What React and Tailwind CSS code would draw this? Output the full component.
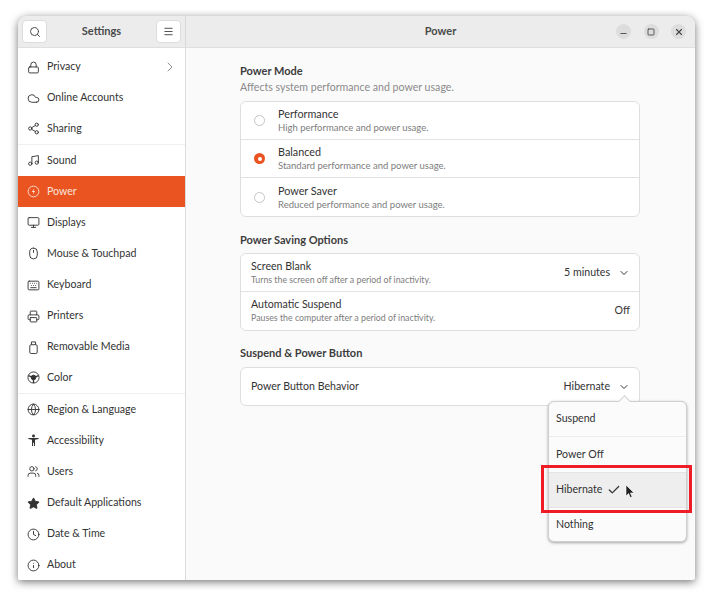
import { Search, Menu, Lock, Cloud, Share2, Music, Monitor, Mouse, Keyboard, Printer, Globe, Users, Star, Clock, Info, ChevronRight, ChevronDown, Check, Minus, Square, X } from 'lucide-react'

const PowerIcon = (p) => (
  <svg viewBox="0 0 14 14" fill="none" {...p}>
    <circle cx="7" cy="7" r="5.8" stroke="currentColor" strokeWidth="1" />
    <path d="M7.8 3.4 5.2 7.5h1.9l-.9 3.1 2.6-4.2H6.9z" fill="currentColor" />
  </svg>
)
const MediaIcon = (p) => (
  <svg viewBox="0 0 14 14" fill="none" stroke="currentColor" {...p} strokeWidth="1">
    <rect x="3" y="4" width="8" height="9.5" rx="1.5" />
    <path d="M4.8 4V1h4.4v3" />
  </svg>
)
const ColorIcon = (p) => (
  <svg viewBox="0 0 14 14" fill="none" stroke="currentColor" {...p} strokeWidth="1">
    <circle cx="7" cy="7" r="6" />
    <circle cx="7" cy="7" r="2.5" fill="currentColor" />
    <path d="M1.5 5 7 7l5.5-2M7 7v6" strokeWidth="1.4" />
  </svg>
)
const AccessIcon = (p) => (
  <svg viewBox="0 0 14 14" fill="currentColor" {...p}>
    <circle cx="7" cy="2.2" r="1.6" />
    <path d="M1.5 4.2h11v1.3L8.6 6.2V13H7.5V9.5h-1V13H5.4V6.2L1.5 5.5z" />
  </svg>
)

const nav = [
  { label: 'Privacy', icon: Lock, arrow: true },
  { label: 'Online Accounts', icon: Cloud },
  { label: 'Sharing', icon: Share2, sep: true },
  { label: 'Sound', icon: Music },
  { label: 'Power', icon: PowerIcon, active: true },
  { label: 'Displays', icon: Monitor },
  { label: 'Mouse & Touchpad', icon: Mouse },
  { label: 'Keyboard', icon: Keyboard },
  { label: 'Printers', icon: Printer },
  { label: 'Removable Media', icon: MediaIcon },
  { label: 'Color', icon: ColorIcon, sep: true },
  { label: 'Region & Language', icon: Globe },
  { label: 'Accessibility', icon: AccessIcon },
  { label: 'Users', icon: Users },
  { label: 'Default Applications', icon: Star, filled: true },
  { label: 'Date & Time', icon: Clock },
  { label: 'About', icon: Info },
]

const modes = [
  { title: 'Performance', sub: 'High performance and power usage.' },
  { title: 'Balanced', sub: 'Standard performance and power usage.', on: true },
  { title: 'Power Saver', sub: 'Reduced performance and power usage.' },
]

function NavRow({ item }) {
  const Icon = item.icon
  const extra = item.filled ? { fill: 'currentColor' } : {}
  return (
    <div className={`h-[31.15px] flex items-center pl-[9px] pr-[7px] text-[10.6px] ${item.active ? 'bg-[#e95420] text-[#fbe3d9]' : 'text-[#333]'} ${item.sep ? 'border-b border-[#efefef]' : ''}`}>
      <Icon className="w-[13px] h-[13px] shrink-0" strokeWidth={1.7} {...extra} />
      <span className="ml-[7px] flex-1">{item.label}</span>
      {item.arrow && <ChevronRight className="w-[16px] h-[16px] text-[#555]" strokeWidth={1} />}
    </div>
  )
}

function Heading({ children }) {
  return <div className="text-[11px] font-bold text-[#3d3d3d] leading-[14px]">{children}</div>
}

function SettingRow({ title, sub, value, chevron, last }) {
  return (
    <div className={`${sub ? 'h-[38px]' : 'h-[37px]'} flex items-center pl-[10px] pr-[9px] ${last ? '' : 'border-b border-[#e2e2e2]'}`}>
      <div className="flex-1">
        <div className="text-[10.6px] text-[#333] leading-[13px]">{title}</div>
        {sub && <div className="text-[8.8px] text-[#7d7d7d] leading-[12px] mt-[1px]">{sub}</div>}
      </div>
      <span className="text-[10.6px] text-[#333]">{value}</span>
      {chevron && <ChevronDown className="w-[12px] h-[12px] ml-[8px] text-[#333]" strokeWidth={2} />}
    </div>
  )
}

export default function App() {
  return (
    <div className="h-[600px] bg-white overflow-hidden pt-[16px] pl-[18px]" style={{ fontFamily: 'Lato, "Noto Sans", sans-serif' }}>
      <div className="relative w-[677px] h-[564px] rounded-t-[9px] rounded-b-[2px] overflow-hidden flex flex-col bg-[#fafafa] shadow-[0_2px_9px_rgba(0,0,0,0.55)]">
        <header className="h-[32px] shrink-0 flex bg-[#ececec] border-b border-[#dfdfdf]">
          <div className="w-[168px] shrink-0 flex items-center justify-between px-[4px] border-r border-[#d9d9d9]">
            <div className="w-[25px] h-[23px] bg-white rounded-[4px] border border-[#dcdcdc] flex items-center justify-center">
              <Search className="w-[12px] h-[12px] text-[#444]" strokeWidth={1.9} />
            </div>
            <span className="text-[11px] font-bold text-[#4a4a4a]">Settings</span>
            <div className="w-[25px] h-[23px] bg-white rounded-[4px] border border-[#dcdcdc] flex items-center justify-center">
              <Menu className="w-[11px] h-[11px] text-[#444]" strokeWidth={2} />
            </div>
          </div>
          <div className="flex-1 flex items-center relative">
            <div className="flex-1 text-center text-[11px] font-bold text-[#4a4a4a]">Power</div>
            <div className="absolute right-[9px] top-[8px] flex gap-[12.5px]">
              <div className="w-[15px] h-[15px] rounded-full bg-[#dddddd] flex items-center justify-center"><Minus className="w-[9px] h-[9px] text-[#444] translate-y-[2px]" strokeWidth={2.4} /></div>
              <div className="w-[15px] h-[15px] rounded-full bg-[#dddddd] flex items-center justify-center"><Square className="w-[8px] h-[8px] text-[#444]" strokeWidth={2.6} /></div>
              <div className="w-[15px] h-[15px] rounded-full bg-[#dddddd] flex items-center justify-center"><X className="w-[10px] h-[10px] text-[#444]" strokeWidth={2.6} /></div>
            </div>
          </div>
        </header>

        <div className="flex-1 flex min-h-0">
          <aside className="w-[168px] shrink-0 bg-white border-r border-[#dcdcdc] pt-[3.5px]">
            {nav.map((item) => <NavRow key={item.label} item={item} />)}
          </aside>

          <main className="flex-1 pt-[16px] pl-[54px]">
            <div className="w-[400px]">
              <Heading>Power Mode</Heading>
              <div className="text-[10.6px] text-[#8a8a8a] leading-[14px] mt-[2px]">Affects system performance and power usage.</div>
              <div className="mt-[7px] bg-white rounded-[6px] border border-[#dedede]">
                {modes.map((m, i) => (
                  <div key={m.title} className={`h-[38px] flex items-center ${i < 2 ? 'border-b border-[#e2e2e2]' : ''}`}>
                    <div className="w-[37px] flex justify-center">
                      {m.on ? (
                        <div className="w-[11px] h-[11px] rounded-full bg-[#e95420] flex items-center justify-center"><div className="w-[4px] h-[4px] rounded-full bg-white" /></div>
                      ) : (
                        <div className="w-[11px] h-[11px] rounded-full border border-[#c4c4c4] bg-white" />
                      )}
                    </div>
                    <div>
                      <div className="text-[10.8px] text-[#333] leading-[13px]">{m.title}</div>
                      <div className="text-[9.5px] text-[#7d7d7d] leading-[12px] mt-[2px]">{m.sub}</div>
                    </div>
                  </div>
                ))}
              </div>

              <div className="mt-[16px]"><Heading>Power Saving Options</Heading></div>
              <div className="mt-[6px] bg-white rounded-[6px] border border-[#dedede]">
                <SettingRow title="Screen Blank" sub="Turns the screen off after a period of inactivity." value="5 minutes" chevron />
                <SettingRow title="Automatic Suspend" sub="Pauses the computer after a period of inactivity." value="Off" last />
              </div>

              <div className="mt-[15px]"><Heading>Suspend &amp; Power Button</Heading></div>
              <div className="mt-[7px] bg-white rounded-[6px] border border-[#dedede]">
                <SettingRow title="Power Button Behavior" value="Hibernate" chevron last />
              </div>
            </div>
          </main>
        </div>

        {/* popover over the combo row */}
        <div className="absolute left-[530px] top-[385px] w-[139px] h-[141px] bg-[#fbfbfb] rounded-[6px] border border-[#cfcfcf] shadow-[0_1px_3px_rgba(0,0,0,0.35)] text-[10.6px] text-[#333] flex flex-col">
          <div className="absolute left-[71px] top-[-5px] w-[9px] h-[9px] rotate-45 bg-[#fbfbfb] border-l border-t border-[#cfcfcf]" />
          <div className="h-[35px] flex items-center pl-[7px] border-b border-[#ececec]">Suspend</div>
          <div className="h-[35px] flex items-center pl-[7px]">Power Off</div>
          <div className="h-[36px] flex items-center pl-[7px] bg-[#eeeeee] border-y border-[#e4e4e4]">
            Hibernate
            <Check className="w-[14px] h-[14px] ml-[5px] text-[#333]" strokeWidth={2.2} />
          </div>
          <div className="h-[33px] flex items-center pl-[7px]">Nothing</div>
        </div>

        {/* red annotation box + pointer */}
        <div className="absolute left-[523px] top-[449px] w-[151px] h-[48px] border-[3px] border-[#ee1c25]" />
        <svg className="absolute left-[607px] top-[468px] w-[10px] h-[15px]" viewBox="0 0 10 15">
          <path d="M1 1v11l2.6-2.4 1.7 4 1.8-.8-1.7-3.8H9z" fill="#222" stroke="#fff" strokeWidth="0.6" />
        </svg>
      </div>
    </div>
  )
}
